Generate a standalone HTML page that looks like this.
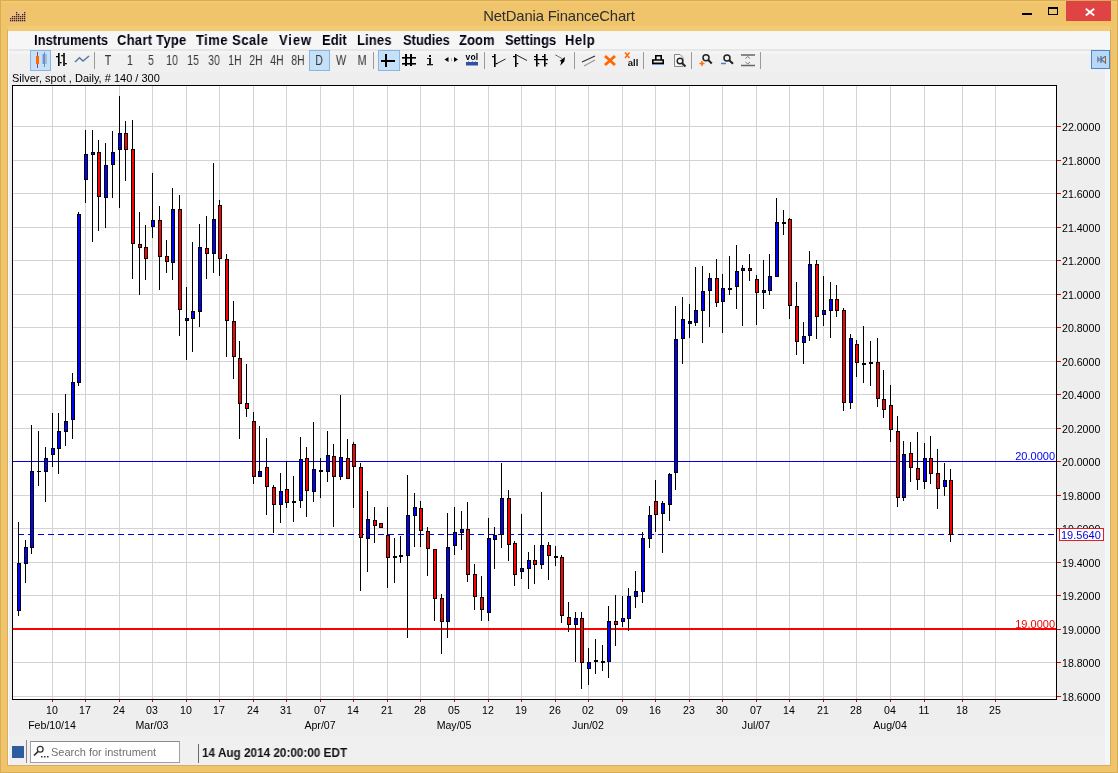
<!DOCTYPE html>
<html><head><meta charset="utf-8">
<style>
*{margin:0;padding:0;box-sizing:border-box}
html,body{width:1118px;height:773px;overflow:hidden;background:#efc46b;font-family:"Liberation Sans",sans-serif;position:relative}
.a,.menu,.tb,.yl,.xl,.ml{will-change:transform}
.a{position:absolute}
.frame{position:absolute;left:0;top:0;width:1118px;height:773px;border:1px solid #d9ad55}
.client{position:absolute;left:8px;top:31px;width:1102px;height:734px;background:#f0f0f0;border-left:1px solid #fafafa;border-right:5px solid #f4f6fa;border-bottom:2px solid #f0eef8}
.menubar{position:absolute;left:9px;top:31px;width:1096px;height:18px;background:#f6f6f6}
.menu{position:absolute;top:32px;font-weight:bold;font-size:14px;color:#000010;white-space:nowrap;transform:scaleX(0.925);transform-origin:0 0}
.tb{position:absolute;top:53px;font-size:12px;color:#333;white-space:nowrap}
.yl{position:absolute;left:1062px;font-size:10.6px;color:#000;line-height:14px;white-space:nowrap}
.xl{position:absolute;top:703px;width:40px;text-align:center;font-size:10.6px;line-height:14px;color:#000}
.ml{position:absolute;top:718px;width:80px;text-align:center;font-size:10.6px;line-height:14px;color:#000}
.sep{position:absolute;top:52px;width:1px;height:17px;background:#a8a8a8}
</style></head><body>
<div class="frame"></div>
<div class="a" style="left:1px;top:1px;width:1116px;height:2px;background:#f2c970"></div>
<div class="a" style="left:8px;top:26px;width:1102px;height:5px;background:#f3cb74"></div>
<div class="client"></div>
<div class="menubar"></div>
<div class="a" style="left:9px;top:49px;width:1096px;height:2px;background:#e7e7e7"></div>
<div class="a" style="left:9px;top:51px;width:1096px;height:3px;background:#f4f4f4"></div>
<div class="a" style="left:9px;top:72px;width:1096px;height:664px;background:#eeeeee"></div>
<div class="a" style="left:7px;top:30px;width:1px;height:736px;background:#d8ae58"></div>
<div class="a" style="left:1110px;top:30px;width:1px;height:736px;background:#d8ae58"></div>
<div class="a" style="left:7px;top:765px;width:1104px;height:1px;background:#d8ae58"></div>
<!-- title -->
<div class="a" style="left:0;top:7px;width:1118px;text-align:center;font-size:14.8px;letter-spacing:-0.15px;color:#2e2e2e;line-height:18px">NetDania FinanceChart</div>
<svg class="a" style="left:8px;top:8px" width="26" height="18">
<g>
<rect x="0" y="0" width="1" height="1" fill="#e8b8d8" opacity="0.6"/><rect x="2" y="0" width="1" height="1" fill="#e8b8d8" opacity="0.6"/><rect x="4" y="0" width="1" height="1" fill="#e8b8d8" opacity="0.6"/><rect x="6" y="0" width="1" height="1" fill="#e8b8d8" opacity="0.6"/><rect x="8" y="0" width="1" height="1" fill="#e8b8d8" opacity="0.6"/><rect x="10" y="0" width="1" height="1" fill="#e8b8d8" opacity="0.6"/><rect x="12" y="0" width="1" height="1" fill="#e8b8d8" opacity="0.6"/><rect x="14" y="0" width="1" height="1" fill="#e8b8d8" opacity="0.6"/><rect x="16" y="0" width="1" height="1" fill="#e8b8d8" opacity="0.6"/><rect x="0" y="2" width="1" height="1" fill="#e8b8d8" opacity="0.6"/><rect x="2" y="2" width="1" height="1" fill="#e8b8d8" opacity="0.6"/><rect x="4" y="2" width="1" height="1" fill="#e8b8d8" opacity="0.6"/><rect x="6" y="2" width="1" height="1" fill="#e8b8d8" opacity="0.6"/><rect x="8" y="2" width="1" height="1" fill="#e8b8d8" opacity="0.6"/><rect x="10" y="2" width="1" height="1" fill="#e8b8d8" opacity="0.6"/><rect x="12" y="2" width="1" height="1" fill="#e8b8d8" opacity="0.6"/><rect x="14" y="2" width="1" height="1" fill="#e8b8d8" opacity="0.6"/><rect x="16" y="2" width="1" height="1" fill="#e8b8d8" opacity="0.6"/><rect x="0" y="4" width="1" height="1" fill="#e8b8d8" opacity="0.6"/><rect x="2" y="4" width="1" height="1" fill="#e8b8d8" opacity="0.6"/><rect x="4" y="4" width="1" height="1" fill="#e8b8d8" opacity="0.6"/><rect x="6" y="4" width="1" height="1" fill="#e8b8d8" opacity="0.6"/><rect x="8" y="4" width="1.3" height="1.3" fill="#3a1a40"/><rect x="10" y="4" width="1" height="1" fill="#e8b8d8" opacity="0.6"/><rect x="12" y="4" width="1" height="1" fill="#e8b8d8" opacity="0.6"/><rect x="14" y="4" width="1" height="1" fill="#e8b8d8" opacity="0.6"/><rect x="16" y="4" width="1.3" height="1.3" fill="#3a1a40"/><rect x="0" y="6" width="1" height="1" fill="#e8b8d8" opacity="0.6"/><rect x="2" y="6" width="1" height="1" fill="#e8b8d8" opacity="0.6"/><rect x="4" y="6" width="1" height="1" fill="#e8b8d8" opacity="0.6"/><rect x="6" y="6" width="1" height="1" fill="#e8b8d8" opacity="0.6"/><rect x="8" y="6" width="1.3" height="1.3" fill="#3a1a40"/><rect x="10" y="6" width="1.3" height="1.3" fill="#3a1a40"/><rect x="12" y="6" width="1" height="1" fill="#e8b8d8" opacity="0.6"/><rect x="14" y="6" width="1.3" height="1.3" fill="#3a1a40"/><rect x="16" y="6" width="1.3" height="1.3" fill="#3a1a40"/><rect x="0" y="8" width="1" height="1" fill="#e8b8d8" opacity="0.6"/><rect x="2" y="8" width="1" height="1" fill="#e8b8d8" opacity="0.6"/><rect x="4" y="8" width="1.3" height="1.3" fill="#3a1a40"/><rect x="6" y="8" width="1.3" height="1.3" fill="#3a1a40"/><rect x="8" y="8" width="1.3" height="1.3" fill="#3a1a40"/><rect x="10" y="8" width="1.3" height="1.3" fill="#3a1a40"/><rect x="12" y="8" width="1.3" height="1.3" fill="#3a1a40"/><rect x="14" y="8" width="1.3" height="1.3" fill="#3a1a40"/><rect x="16" y="8" width="1.3" height="1.3" fill="#3a1a40"/><rect x="0" y="10" width="1" height="1" fill="#e8b8d8" opacity="0.6"/><rect x="2" y="10" width="1.3" height="1.3" fill="#3a1a40"/><rect x="4" y="10" width="1.3" height="1.3" fill="#3a1a40"/><rect x="6" y="10" width="1.3" height="1.3" fill="#3a1a40"/><rect x="8" y="10" width="1.3" height="1.3" fill="#3a1a40"/><rect x="10" y="10" width="1.3" height="1.3" fill="#3a1a40"/><rect x="12" y="10" width="1.3" height="1.3" fill="#3a1a40"/><rect x="14" y="10" width="1.3" height="1.3" fill="#3a1a40"/><rect x="16" y="10" width="1.3" height="1.3" fill="#3a1a40"/><rect x="0" y="12" width="1" height="1" fill="#e8b8d8" opacity="0.6"/><rect x="2" y="12" width="1.3" height="1.3" fill="#3a1a40"/><rect x="4" y="12" width="1.3" height="1.3" fill="#3a1a40"/><rect x="6" y="12" width="1.3" height="1.3" fill="#3a1a40"/><rect x="8" y="12" width="1.3" height="1.3" fill="#3a1a40"/><rect x="10" y="12" width="1.3" height="1.3" fill="#3a1a40"/><rect x="12" y="12" width="1.3" height="1.3" fill="#3a1a40"/><rect x="14" y="12" width="1.3" height="1.3" fill="#3a1a40"/><rect x="16" y="12" width="1.3" height="1.3" fill="#3a1a40"/><rect x="0" y="14" width="1" height="1" fill="#e8b8d8" opacity="0.6"/><rect x="2" y="14" width="1" height="1" fill="#e8b8d8" opacity="0.6"/><rect x="4" y="14" width="1" height="1" fill="#e8b8d8" opacity="0.6"/><rect x="6" y="14" width="1" height="1" fill="#e8b8d8" opacity="0.6"/><rect x="8" y="14" width="1" height="1" fill="#e8b8d8" opacity="0.6"/><rect x="10" y="14" width="1" height="1" fill="#e8b8d8" opacity="0.6"/><rect x="12" y="14" width="1" height="1" fill="#e8b8d8" opacity="0.6"/><rect x="14" y="14" width="1" height="1" fill="#e8b8d8" opacity="0.6"/><rect x="16" y="14" width="1" height="1" fill="#e8b8d8" opacity="0.6"/></g></svg>
<div class="a" style="left:1022px;top:13px;width:10px;height:2px;background:#000"></div>
<div class="a" style="left:1048px;top:7px;width:10px;height:8px;border:1px solid #000;border-top-width:2px"></div>
<div class="a" style="left:1066px;top:1px;width:45px;height:20px;background:#e04343"></div>
<svg class="a" style="left:1084px;top:7px" width="12" height="10"><path d="M1.8 1.8 L10.2 8.6 M10.2 1.8 L1.8 8.6" stroke="#fff" stroke-width="1.9"/></svg>
<div class="menu" style="left:34px;letter-spacing:0px">Instruments</div>
<div class="menu" style="left:116.5px;letter-spacing:0.31px">Chart Type</div>
<div class="menu" style="left:195.5px;letter-spacing:0.54px">Time Scale</div>
<div class="menu" style="left:278.5px;letter-spacing:1.0px">View</div>
<div class="menu" style="left:321.5px;letter-spacing:0.07px">Edit</div>
<div class="menu" style="left:356.5px;letter-spacing:0.17px">Lines</div>
<div class="menu" style="left:402.5px;letter-spacing:0px">Studies</div>
<div class="menu" style="left:458.5px;letter-spacing:0.1px">Zoom</div>
<div class="menu" style="left:504.5px;letter-spacing:0px">Settings</div>
<div class="menu" style="left:564.5px;letter-spacing:0.57px">Help</div>

<svg class="a" style="left:0;top:0" width="1118" height="773">
<rect x="12" y="85" width="1045" height="615" fill="#fff"/>
<rect x="52" y="86" width="1" height="613" fill="#d3d3d3"/>
<rect x="85" y="86" width="1" height="613" fill="#d3d3d3"/>
<rect x="119" y="86" width="1" height="613" fill="#d3d3d3"/>
<rect x="152" y="86" width="1" height="613" fill="#d3d3d3"/>
<rect x="186" y="86" width="1" height="613" fill="#d3d3d3"/>
<rect x="219" y="86" width="1" height="613" fill="#d3d3d3"/>
<rect x="253" y="86" width="1" height="613" fill="#d3d3d3"/>
<rect x="286" y="86" width="1" height="613" fill="#d3d3d3"/>
<rect x="320" y="86" width="1" height="613" fill="#d3d3d3"/>
<rect x="353" y="86" width="1" height="613" fill="#d3d3d3"/>
<rect x="387" y="86" width="1" height="613" fill="#d3d3d3"/>
<rect x="420" y="86" width="1" height="613" fill="#d3d3d3"/>
<rect x="454" y="86" width="1" height="613" fill="#d3d3d3"/>
<rect x="488" y="86" width="1" height="613" fill="#d3d3d3"/>
<rect x="521" y="86" width="1" height="613" fill="#d3d3d3"/>
<rect x="555" y="86" width="1" height="613" fill="#d3d3d3"/>
<rect x="588" y="86" width="1" height="613" fill="#d3d3d3"/>
<rect x="622" y="86" width="1" height="613" fill="#d3d3d3"/>
<rect x="655" y="86" width="1" height="613" fill="#d3d3d3"/>
<rect x="689" y="86" width="1" height="613" fill="#d3d3d3"/>
<rect x="722" y="86" width="1" height="613" fill="#d3d3d3"/>
<rect x="756" y="86" width="1" height="613" fill="#d3d3d3"/>
<rect x="789" y="86" width="1" height="613" fill="#d3d3d3"/>
<rect x="823" y="86" width="1" height="613" fill="#d3d3d3"/>
<rect x="856" y="86" width="1" height="613" fill="#d3d3d3"/>
<rect x="890" y="86" width="1" height="613" fill="#d3d3d3"/>
<rect x="924" y="86" width="1" height="613" fill="#d3d3d3"/>
<rect x="962" y="86" width="1" height="613" fill="#d3d3d3"/>
<rect x="995" y="86" width="1" height="613" fill="#d3d3d3"/>
<rect x="13" y="126" width="1043" height="1" fill="#d3d3d3"/>
<rect x="13" y="160" width="1043" height="1" fill="#d3d3d3"/>
<rect x="13" y="193" width="1043" height="1" fill="#d3d3d3"/>
<rect x="13" y="227" width="1043" height="1" fill="#d3d3d3"/>
<rect x="13" y="260" width="1043" height="1" fill="#d3d3d3"/>
<rect x="13" y="294" width="1043" height="1" fill="#d3d3d3"/>
<rect x="13" y="327" width="1043" height="1" fill="#d3d3d3"/>
<rect x="13" y="361" width="1043" height="1" fill="#d3d3d3"/>
<rect x="13" y="394" width="1043" height="1" fill="#d3d3d3"/>
<rect x="13" y="428" width="1043" height="1" fill="#d3d3d3"/>
<rect x="13" y="461" width="1043" height="1" fill="#d3d3d3"/>
<rect x="13" y="495" width="1043" height="1" fill="#d3d3d3"/>
<rect x="13" y="528" width="1043" height="1" fill="#d3d3d3"/>
<rect x="13" y="562" width="1043" height="1" fill="#d3d3d3"/>
<rect x="13" y="595" width="1043" height="1" fill="#d3d3d3"/>
<rect x="13" y="629" width="1043" height="1" fill="#d3d3d3"/>
<rect x="13" y="662" width="1043" height="1" fill="#d3d3d3"/>
<rect x="13" y="696" width="1043" height="1" fill="#d3d3d3"/>
<rect x="13" y="461" width="1043" height="1" fill="#0000f0"/>
<rect x="13" y="628" width="1043" height="2" fill="#ff0000"/>
<line x1="18" y1="534.5" x2="1056" y2="534.5" stroke="#0000f0" stroke-width="1" stroke-dasharray="6 4"/>
<rect x="18" y="522" width="1" height="94" fill="#000"/>
<rect x="17" y="563" width="4" height="48" fill="#000"/>
<rect x="18" y="564" width="2" height="46" fill="#0000ff"/>
<rect x="25" y="540" width="1" height="43" fill="#000"/>
<rect x="24" y="547" width="4" height="17" fill="#000"/>
<rect x="25" y="548" width="2" height="15" fill="#0000ff"/>
<rect x="31" y="425" width="1" height="129" fill="#000"/>
<rect x="30" y="471" width="4" height="77" fill="#000"/>
<rect x="31" y="472" width="2" height="75" fill="#0000ff"/>
<rect x="38" y="431" width="1" height="55" fill="#000"/>
<rect x="37" y="471" width="4" height="1" fill="#000"/>
<rect x="45" y="447" width="1" height="55" fill="#000"/>
<rect x="44" y="458" width="4" height="14" fill="#000"/>
<rect x="45" y="459" width="2" height="12" fill="#0000ff"/>
<rect x="52" y="413" width="1" height="54" fill="#000"/>
<rect x="51" y="448" width="4" height="7" fill="#000"/>
<rect x="52" y="449" width="2" height="5" fill="#0000ff"/>
<rect x="58" y="413" width="1" height="61" fill="#000"/>
<rect x="57" y="431" width="4" height="18" fill="#000"/>
<rect x="58" y="432" width="2" height="16" fill="#0000ff"/>
<rect x="65" y="394" width="1" height="52" fill="#000"/>
<rect x="64" y="421" width="4" height="11" fill="#000"/>
<rect x="65" y="422" width="2" height="9" fill="#0000ff"/>
<rect x="72" y="373" width="1" height="66" fill="#000"/>
<rect x="71" y="382" width="4" height="38" fill="#000"/>
<rect x="72" y="383" width="2" height="36" fill="#0000ff"/>
<rect x="78" y="212" width="1" height="174" fill="#000"/>
<rect x="77" y="214" width="4" height="169" fill="#000"/>
<rect x="78" y="215" width="2" height="167" fill="#0000ff"/>
<rect x="85" y="130" width="1" height="73" fill="#000"/>
<rect x="84" y="154" width="4" height="26" fill="#000"/>
<rect x="85" y="155" width="2" height="24" fill="#0000ff"/>
<rect x="92" y="130" width="1" height="112" fill="#000"/>
<rect x="91" y="152" width="4" height="3" fill="#000"/>
<rect x="92" y="153" width="2" height="1" fill="#0000ff"/>
<rect x="98" y="140" width="1" height="91" fill="#000"/>
<rect x="97" y="152" width="4" height="45" fill="#000"/>
<rect x="98" y="153" width="2" height="43" fill="#ff0000"/>
<rect x="105" y="143" width="1" height="85" fill="#000"/>
<rect x="104" y="165" width="4" height="33" fill="#000"/>
<rect x="105" y="166" width="2" height="31" fill="#0000ff"/>
<rect x="112" y="131" width="1" height="67" fill="#000"/>
<rect x="111" y="152" width="4" height="13" fill="#000"/>
<rect x="112" y="153" width="2" height="11" fill="#0000ff"/>
<rect x="119" y="96" width="1" height="112" fill="#000"/>
<rect x="118" y="133" width="4" height="17" fill="#000"/>
<rect x="119" y="134" width="2" height="15" fill="#0000ff"/>
<rect x="125" y="121" width="1" height="60" fill="#000"/>
<rect x="124" y="133" width="4" height="17" fill="#000"/>
<rect x="125" y="134" width="2" height="15" fill="#ff0000"/>
<rect x="132" y="120" width="1" height="159" fill="#000"/>
<rect x="131" y="149" width="4" height="95" fill="#000"/>
<rect x="132" y="150" width="2" height="93" fill="#ff0000"/>
<rect x="139" y="212" width="1" height="83" fill="#000"/>
<rect x="138" y="244" width="4" height="4" fill="#000"/>
<rect x="139" y="245" width="2" height="2" fill="#ff0000"/>
<rect x="145" y="225" width="1" height="55" fill="#000"/>
<rect x="144" y="247" width="4" height="12" fill="#000"/>
<rect x="145" y="248" width="2" height="10" fill="#ff0000"/>
<rect x="152" y="173" width="1" height="65" fill="#000"/>
<rect x="151" y="220" width="4" height="7" fill="#000"/>
<rect x="152" y="221" width="2" height="5" fill="#0000ff"/>
<rect x="159" y="206" width="1" height="84" fill="#000"/>
<rect x="158" y="220" width="4" height="37" fill="#000"/>
<rect x="159" y="221" width="2" height="35" fill="#ff0000"/>
<rect x="166" y="240" width="1" height="33" fill="#000"/>
<rect x="165" y="256" width="4" height="6" fill="#000"/>
<rect x="166" y="257" width="2" height="4" fill="#ff0000"/>
<rect x="172" y="188" width="1" height="92" fill="#000"/>
<rect x="171" y="209" width="4" height="54" fill="#000"/>
<rect x="172" y="210" width="2" height="52" fill="#0000ff"/>
<rect x="179" y="195" width="1" height="141" fill="#000"/>
<rect x="178" y="209" width="4" height="101" fill="#000"/>
<rect x="179" y="210" width="2" height="99" fill="#ff0000"/>
<rect x="186" y="287" width="1" height="73" fill="#000"/>
<rect x="185" y="318" width="4" height="3" fill="#000"/>
<rect x="186" y="319" width="2" height="1" fill="#0000ff"/>
<rect x="192" y="242" width="1" height="110" fill="#000"/>
<rect x="191" y="311" width="4" height="8" fill="#000"/>
<rect x="192" y="312" width="2" height="6" fill="#0000ff"/>
<rect x="199" y="224" width="1" height="103" fill="#000"/>
<rect x="198" y="247" width="4" height="65" fill="#000"/>
<rect x="199" y="248" width="2" height="63" fill="#0000ff"/>
<rect x="206" y="216" width="1" height="63" fill="#000"/>
<rect x="205" y="248" width="4" height="6" fill="#000"/>
<rect x="206" y="249" width="2" height="4" fill="#ff0000"/>
<rect x="213" y="163" width="1" height="110" fill="#000"/>
<rect x="212" y="219" width="4" height="35" fill="#000"/>
<rect x="213" y="220" width="2" height="33" fill="#0000ff"/>
<rect x="219" y="200" width="1" height="76" fill="#000"/>
<rect x="218" y="205" width="4" height="54" fill="#000"/>
<rect x="219" y="206" width="2" height="52" fill="#ff0000"/>
<rect x="226" y="254" width="1" height="103" fill="#000"/>
<rect x="225" y="259" width="4" height="62" fill="#000"/>
<rect x="226" y="260" width="2" height="60" fill="#ff0000"/>
<rect x="233" y="301" width="1" height="78" fill="#000"/>
<rect x="232" y="321" width="4" height="36" fill="#000"/>
<rect x="233" y="322" width="2" height="34" fill="#ff0000"/>
<rect x="239" y="341" width="1" height="98" fill="#000"/>
<rect x="238" y="358" width="4" height="46" fill="#000"/>
<rect x="239" y="359" width="2" height="44" fill="#ff0000"/>
<rect x="246" y="364" width="1" height="53" fill="#000"/>
<rect x="245" y="403" width="4" height="6" fill="#000"/>
<rect x="246" y="404" width="2" height="4" fill="#ff0000"/>
<rect x="253" y="412" width="1" height="72" fill="#000"/>
<rect x="252" y="421" width="4" height="56" fill="#000"/>
<rect x="253" y="422" width="2" height="54" fill="#ff0000"/>
<rect x="259" y="426" width="1" height="51" fill="#000"/>
<rect x="258" y="471" width="4" height="6" fill="#000"/>
<rect x="259" y="472" width="2" height="4" fill="#0000ff"/>
<rect x="266" y="438" width="1" height="77" fill="#000"/>
<rect x="265" y="467" width="4" height="20" fill="#000"/>
<rect x="266" y="468" width="2" height="18" fill="#ff0000"/>
<rect x="273" y="485" width="1" height="48" fill="#000"/>
<rect x="272" y="487" width="4" height="18" fill="#000"/>
<rect x="273" y="488" width="2" height="16" fill="#ff0000"/>
<rect x="280" y="473" width="1" height="50" fill="#000"/>
<rect x="279" y="491" width="4" height="14" fill="#000"/>
<rect x="280" y="492" width="2" height="12" fill="#0000ff"/>
<rect x="286" y="461" width="1" height="47" fill="#000"/>
<rect x="285" y="489" width="4" height="14" fill="#000"/>
<rect x="286" y="490" width="2" height="12" fill="#ff0000"/>
<rect x="293" y="476" width="1" height="46" fill="#000"/>
<rect x="292" y="501" width="4" height="2" fill="#000"/>
<rect x="300" y="437" width="1" height="71" fill="#000"/>
<rect x="299" y="459" width="4" height="42" fill="#000"/>
<rect x="300" y="460" width="2" height="40" fill="#0000ff"/>
<rect x="306" y="447" width="1" height="70" fill="#000"/>
<rect x="305" y="458" width="4" height="33" fill="#000"/>
<rect x="306" y="459" width="2" height="31" fill="#ff0000"/>
<rect x="313" y="422" width="1" height="80" fill="#000"/>
<rect x="312" y="469" width="4" height="23" fill="#000"/>
<rect x="313" y="470" width="2" height="21" fill="#0000ff"/>
<rect x="320" y="458" width="1" height="40" fill="#000"/>
<rect x="319" y="470" width="4" height="2" fill="#000"/>
<rect x="327" y="431" width="1" height="51" fill="#000"/>
<rect x="326" y="455" width="4" height="17" fill="#000"/>
<rect x="327" y="456" width="2" height="15" fill="#0000ff"/>
<rect x="333" y="444" width="1" height="83" fill="#000"/>
<rect x="332" y="456" width="4" height="21" fill="#000"/>
<rect x="333" y="457" width="2" height="19" fill="#ff0000"/>
<rect x="340" y="395" width="1" height="85" fill="#000"/>
<rect x="339" y="457" width="4" height="20" fill="#000"/>
<rect x="340" y="458" width="2" height="18" fill="#0000ff"/>
<rect x="347" y="439" width="1" height="40" fill="#000"/>
<rect x="346" y="458" width="4" height="21" fill="#000"/>
<rect x="347" y="459" width="2" height="19" fill="#ff0000"/>
<rect x="353" y="442" width="1" height="66" fill="#000"/>
<rect x="352" y="444" width="4" height="23" fill="#000"/>
<rect x="353" y="445" width="2" height="21" fill="#ff0000"/>
<rect x="360" y="463" width="1" height="128" fill="#000"/>
<rect x="359" y="467" width="4" height="71" fill="#000"/>
<rect x="360" y="468" width="2" height="69" fill="#ff0000"/>
<rect x="367" y="491" width="1" height="81" fill="#000"/>
<rect x="366" y="519" width="4" height="20" fill="#000"/>
<rect x="367" y="520" width="2" height="18" fill="#0000ff"/>
<rect x="374" y="507" width="1" height="36" fill="#000"/>
<rect x="373" y="520" width="4" height="6" fill="#000"/>
<rect x="374" y="521" width="2" height="4" fill="#ff0000"/>
<rect x="380" y="523" width="1" height="5" fill="#000"/>
<rect x="379" y="523" width="4" height="5" fill="#000"/>
<rect x="380" y="524" width="2" height="3" fill="#ff0000"/>
<rect x="387" y="507" width="1" height="81" fill="#000"/>
<rect x="386" y="535" width="4" height="23" fill="#000"/>
<rect x="387" y="536" width="2" height="21" fill="#ff0000"/>
<rect x="394" y="538" width="1" height="45" fill="#000"/>
<rect x="393" y="556" width="4" height="2" fill="#000"/>
<rect x="400" y="536" width="1" height="27" fill="#000"/>
<rect x="399" y="555" width="4" height="2" fill="#000"/>
<rect x="407" y="475" width="1" height="163" fill="#000"/>
<rect x="406" y="515" width="4" height="41" fill="#000"/>
<rect x="407" y="516" width="2" height="39" fill="#0000ff"/>
<rect x="414" y="493" width="1" height="54" fill="#000"/>
<rect x="413" y="507" width="4" height="9" fill="#000"/>
<rect x="414" y="508" width="2" height="7" fill="#0000ff"/>
<rect x="420" y="501" width="1" height="46" fill="#000"/>
<rect x="419" y="508" width="4" height="23" fill="#000"/>
<rect x="420" y="509" width="2" height="21" fill="#ff0000"/>
<rect x="427" y="527" width="1" height="49" fill="#000"/>
<rect x="426" y="531" width="4" height="18" fill="#000"/>
<rect x="427" y="532" width="2" height="16" fill="#ff0000"/>
<rect x="434" y="549" width="1" height="72" fill="#000"/>
<rect x="433" y="549" width="4" height="50" fill="#000"/>
<rect x="434" y="550" width="2" height="48" fill="#ff0000"/>
<rect x="441" y="594" width="1" height="60" fill="#000"/>
<rect x="440" y="598" width="4" height="24" fill="#000"/>
<rect x="441" y="599" width="2" height="22" fill="#ff0000"/>
<rect x="447" y="513" width="1" height="125" fill="#000"/>
<rect x="446" y="547" width="4" height="75" fill="#000"/>
<rect x="447" y="548" width="2" height="73" fill="#0000ff"/>
<rect x="454" y="507" width="1" height="48" fill="#000"/>
<rect x="453" y="532" width="4" height="14" fill="#000"/>
<rect x="454" y="533" width="2" height="12" fill="#0000ff"/>
<rect x="461" y="511" width="1" height="39" fill="#000"/>
<rect x="460" y="529" width="4" height="4" fill="#000"/>
<rect x="461" y="530" width="2" height="2" fill="#0000ff"/>
<rect x="467" y="502" width="1" height="80" fill="#000"/>
<rect x="466" y="529" width="4" height="46" fill="#000"/>
<rect x="467" y="530" width="2" height="44" fill="#ff0000"/>
<rect x="474" y="564" width="1" height="46" fill="#000"/>
<rect x="473" y="574" width="4" height="23" fill="#000"/>
<rect x="474" y="575" width="2" height="21" fill="#ff0000"/>
<rect x="481" y="576" width="1" height="45" fill="#000"/>
<rect x="480" y="597" width="4" height="13" fill="#000"/>
<rect x="481" y="598" width="2" height="11" fill="#ff0000"/>
<rect x="488" y="518" width="1" height="103" fill="#000"/>
<rect x="487" y="538" width="4" height="75" fill="#000"/>
<rect x="488" y="539" width="2" height="73" fill="#0000ff"/>
<rect x="494" y="527" width="1" height="42" fill="#000"/>
<rect x="493" y="535" width="4" height="5" fill="#000"/>
<rect x="494" y="536" width="2" height="3" fill="#0000ff"/>
<rect x="501" y="463" width="1" height="85" fill="#000"/>
<rect x="500" y="498" width="4" height="37" fill="#000"/>
<rect x="501" y="499" width="2" height="35" fill="#0000ff"/>
<rect x="508" y="490" width="1" height="71" fill="#000"/>
<rect x="507" y="498" width="4" height="47" fill="#000"/>
<rect x="508" y="499" width="2" height="45" fill="#ff0000"/>
<rect x="514" y="541" width="1" height="45" fill="#000"/>
<rect x="513" y="543" width="4" height="32" fill="#000"/>
<rect x="514" y="544" width="2" height="30" fill="#ff0000"/>
<rect x="521" y="514" width="1" height="65" fill="#000"/>
<rect x="520" y="568" width="4" height="4" fill="#000"/>
<rect x="521" y="569" width="2" height="2" fill="#0000ff"/>
<rect x="528" y="552" width="1" height="37" fill="#000"/>
<rect x="527" y="560" width="4" height="9" fill="#000"/>
<rect x="528" y="561" width="2" height="7" fill="#0000ff"/>
<rect x="534" y="545" width="1" height="39" fill="#000"/>
<rect x="533" y="560" width="4" height="5" fill="#000"/>
<rect x="534" y="561" width="2" height="3" fill="#ff0000"/>
<rect x="541" y="492" width="1" height="77" fill="#000"/>
<rect x="540" y="545" width="4" height="20" fill="#000"/>
<rect x="541" y="546" width="2" height="18" fill="#0000ff"/>
<rect x="548" y="542" width="1" height="38" fill="#000"/>
<rect x="547" y="545" width="4" height="11" fill="#000"/>
<rect x="548" y="546" width="2" height="9" fill="#ff0000"/>
<rect x="555" y="546" width="1" height="20" fill="#000"/>
<rect x="554" y="556" width="4" height="2" fill="#000"/>
<rect x="561" y="555" width="1" height="68" fill="#000"/>
<rect x="560" y="557" width="4" height="59" fill="#000"/>
<rect x="561" y="558" width="2" height="57" fill="#ff0000"/>
<rect x="568" y="602" width="1" height="30" fill="#000"/>
<rect x="567" y="617" width="4" height="8" fill="#000"/>
<rect x="568" y="618" width="2" height="6" fill="#ff0000"/>
<rect x="575" y="612" width="1" height="50" fill="#000"/>
<rect x="574" y="618" width="4" height="7" fill="#000"/>
<rect x="575" y="619" width="2" height="5" fill="#0000ff"/>
<rect x="581" y="612" width="1" height="77" fill="#000"/>
<rect x="580" y="618" width="4" height="45" fill="#000"/>
<rect x="581" y="619" width="2" height="43" fill="#ff0000"/>
<rect x="588" y="648" width="1" height="37" fill="#000"/>
<rect x="587" y="662" width="4" height="7" fill="#000"/>
<rect x="588" y="663" width="2" height="5" fill="#0000ff"/>
<rect x="595" y="639" width="1" height="35" fill="#000"/>
<rect x="594" y="660" width="4" height="2" fill="#000"/>
<rect x="602" y="645" width="1" height="26" fill="#000"/>
<rect x="601" y="661" width="4" height="2" fill="#000"/>
<rect x="608" y="606" width="1" height="72" fill="#000"/>
<rect x="607" y="621" width="4" height="41" fill="#000"/>
<rect x="608" y="622" width="2" height="39" fill="#0000ff"/>
<rect x="615" y="595" width="1" height="51" fill="#000"/>
<rect x="614" y="621" width="4" height="4" fill="#000"/>
<rect x="615" y="622" width="2" height="2" fill="#ff0000"/>
<rect x="622" y="596" width="1" height="31" fill="#000"/>
<rect x="621" y="618" width="4" height="4" fill="#000"/>
<rect x="622" y="619" width="2" height="2" fill="#0000ff"/>
<rect x="628" y="588" width="1" height="43" fill="#000"/>
<rect x="627" y="596" width="4" height="23" fill="#000"/>
<rect x="628" y="597" width="2" height="21" fill="#0000ff"/>
<rect x="635" y="571" width="1" height="37" fill="#000"/>
<rect x="634" y="591" width="4" height="6" fill="#000"/>
<rect x="635" y="592" width="2" height="4" fill="#0000ff"/>
<rect x="642" y="532" width="1" height="71" fill="#000"/>
<rect x="641" y="538" width="4" height="54" fill="#000"/>
<rect x="642" y="539" width="2" height="52" fill="#0000ff"/>
<rect x="649" y="506" width="1" height="42" fill="#000"/>
<rect x="648" y="515" width="4" height="24" fill="#000"/>
<rect x="649" y="516" width="2" height="22" fill="#0000ff"/>
<rect x="655" y="480" width="1" height="52" fill="#000"/>
<rect x="654" y="501" width="4" height="14" fill="#000"/>
<rect x="655" y="502" width="2" height="12" fill="#ff0000"/>
<rect x="662" y="501" width="1" height="52" fill="#000"/>
<rect x="661" y="503" width="4" height="11" fill="#000"/>
<rect x="662" y="504" width="2" height="9" fill="#0000ff"/>
<rect x="669" y="473" width="1" height="48" fill="#000"/>
<rect x="668" y="474" width="4" height="31" fill="#000"/>
<rect x="669" y="475" width="2" height="29" fill="#0000ff"/>
<rect x="675" y="306" width="1" height="184" fill="#000"/>
<rect x="674" y="339" width="4" height="134" fill="#000"/>
<rect x="675" y="340" width="2" height="132" fill="#0000ff"/>
<rect x="682" y="297" width="1" height="67" fill="#000"/>
<rect x="681" y="319" width="4" height="20" fill="#000"/>
<rect x="682" y="320" width="2" height="18" fill="#0000ff"/>
<rect x="689" y="304" width="1" height="34" fill="#000"/>
<rect x="688" y="321" width="4" height="3" fill="#000"/>
<rect x="689" y="322" width="2" height="1" fill="#0000ff"/>
<rect x="695" y="267" width="1" height="59" fill="#000"/>
<rect x="694" y="310" width="4" height="13" fill="#000"/>
<rect x="695" y="311" width="2" height="11" fill="#0000ff"/>
<rect x="702" y="266" width="1" height="77" fill="#000"/>
<rect x="701" y="291" width="4" height="20" fill="#000"/>
<rect x="702" y="292" width="2" height="18" fill="#0000ff"/>
<rect x="709" y="273" width="1" height="54" fill="#000"/>
<rect x="708" y="278" width="4" height="13" fill="#000"/>
<rect x="709" y="279" width="2" height="11" fill="#0000ff"/>
<rect x="716" y="259" width="1" height="48" fill="#000"/>
<rect x="715" y="278" width="4" height="25" fill="#000"/>
<rect x="716" y="279" width="2" height="23" fill="#ff0000"/>
<rect x="722" y="274" width="1" height="59" fill="#000"/>
<rect x="721" y="288" width="4" height="14" fill="#000"/>
<rect x="722" y="289" width="2" height="12" fill="#0000ff"/>
<rect x="729" y="256" width="1" height="39" fill="#000"/>
<rect x="728" y="288" width="4" height="2" fill="#000"/>
<rect x="736" y="245" width="1" height="64" fill="#000"/>
<rect x="735" y="271" width="4" height="16" fill="#000"/>
<rect x="736" y="272" width="2" height="14" fill="#0000ff"/>
<rect x="742" y="265" width="1" height="61" fill="#000"/>
<rect x="741" y="268" width="4" height="3" fill="#000"/>
<rect x="742" y="269" width="2" height="1" fill="#0000ff"/>
<rect x="749" y="254" width="1" height="27" fill="#000"/>
<rect x="748" y="268" width="4" height="3" fill="#000"/>
<rect x="749" y="269" width="2" height="1" fill="#ff0000"/>
<rect x="756" y="275" width="1" height="50" fill="#000"/>
<rect x="755" y="279" width="4" height="14" fill="#000"/>
<rect x="756" y="280" width="2" height="12" fill="#ff0000"/>
<rect x="763" y="260" width="1" height="49" fill="#000"/>
<rect x="762" y="290" width="4" height="3" fill="#000"/>
<rect x="763" y="291" width="2" height="1" fill="#0000ff"/>
<rect x="769" y="254" width="1" height="41" fill="#000"/>
<rect x="768" y="276" width="4" height="15" fill="#000"/>
<rect x="769" y="277" width="2" height="13" fill="#0000ff"/>
<rect x="776" y="198" width="1" height="79" fill="#000"/>
<rect x="775" y="222" width="4" height="55" fill="#000"/>
<rect x="776" y="223" width="2" height="53" fill="#0000ff"/>
<rect x="783" y="210" width="1" height="25" fill="#000"/>
<rect x="782" y="222" width="4" height="2" fill="#000"/>
<rect x="789" y="218" width="1" height="101" fill="#000"/>
<rect x="788" y="219" width="4" height="87" fill="#000"/>
<rect x="789" y="220" width="2" height="85" fill="#ff0000"/>
<rect x="796" y="282" width="1" height="73" fill="#000"/>
<rect x="795" y="306" width="4" height="36" fill="#000"/>
<rect x="796" y="307" width="2" height="34" fill="#ff0000"/>
<rect x="803" y="322" width="1" height="42" fill="#000"/>
<rect x="802" y="336" width="4" height="7" fill="#000"/>
<rect x="803" y="337" width="2" height="5" fill="#0000ff"/>
<rect x="809" y="251" width="1" height="90" fill="#000"/>
<rect x="808" y="264" width="4" height="72" fill="#000"/>
<rect x="809" y="265" width="2" height="70" fill="#0000ff"/>
<rect x="816" y="260" width="1" height="79" fill="#000"/>
<rect x="815" y="264" width="4" height="53" fill="#000"/>
<rect x="816" y="265" width="2" height="51" fill="#ff0000"/>
<rect x="823" y="276" width="1" height="50" fill="#000"/>
<rect x="822" y="310" width="4" height="5" fill="#000"/>
<rect x="823" y="311" width="2" height="3" fill="#0000ff"/>
<rect x="830" y="282" width="1" height="56" fill="#000"/>
<rect x="829" y="299" width="4" height="12" fill="#000"/>
<rect x="830" y="300" width="2" height="10" fill="#0000ff"/>
<rect x="836" y="285" width="1" height="32" fill="#000"/>
<rect x="835" y="299" width="4" height="12" fill="#000"/>
<rect x="836" y="300" width="2" height="10" fill="#ff0000"/>
<rect x="843" y="308" width="1" height="103" fill="#000"/>
<rect x="842" y="310" width="4" height="93" fill="#000"/>
<rect x="843" y="311" width="2" height="91" fill="#ff0000"/>
<rect x="850" y="334" width="1" height="75" fill="#000"/>
<rect x="849" y="338" width="4" height="65" fill="#000"/>
<rect x="850" y="339" width="2" height="63" fill="#0000ff"/>
<rect x="856" y="340" width="1" height="37" fill="#000"/>
<rect x="855" y="344" width="4" height="19" fill="#000"/>
<rect x="856" y="345" width="2" height="17" fill="#ff0000"/>
<rect x="863" y="326" width="1" height="57" fill="#000"/>
<rect x="862" y="363" width="4" height="2" fill="#000"/>
<rect x="870" y="341" width="1" height="45" fill="#000"/>
<rect x="869" y="362" width="4" height="2" fill="#000"/>
<rect x="877" y="338" width="1" height="69" fill="#000"/>
<rect x="876" y="362" width="4" height="37" fill="#000"/>
<rect x="877" y="363" width="2" height="35" fill="#ff0000"/>
<rect x="883" y="370" width="1" height="48" fill="#000"/>
<rect x="882" y="399" width="4" height="11" fill="#000"/>
<rect x="883" y="400" width="2" height="9" fill="#ff0000"/>
<rect x="890" y="385" width="1" height="57" fill="#000"/>
<rect x="889" y="405" width="4" height="25" fill="#000"/>
<rect x="890" y="406" width="2" height="23" fill="#ff0000"/>
<rect x="897" y="416" width="1" height="91" fill="#000"/>
<rect x="896" y="431" width="4" height="67" fill="#000"/>
<rect x="897" y="432" width="2" height="65" fill="#ff0000"/>
<rect x="903" y="441" width="1" height="60" fill="#000"/>
<rect x="902" y="454" width="4" height="44" fill="#000"/>
<rect x="903" y="455" width="2" height="42" fill="#0000ff"/>
<rect x="910" y="442" width="1" height="40" fill="#000"/>
<rect x="909" y="453" width="4" height="15" fill="#000"/>
<rect x="910" y="454" width="2" height="13" fill="#ff0000"/>
<rect x="917" y="432" width="1" height="58" fill="#000"/>
<rect x="916" y="468" width="4" height="12" fill="#000"/>
<rect x="917" y="469" width="2" height="10" fill="#ff0000"/>
<rect x="924" y="443" width="1" height="46" fill="#000"/>
<rect x="923" y="458" width="4" height="24" fill="#000"/>
<rect x="924" y="459" width="2" height="22" fill="#0000ff"/>
<rect x="930" y="436" width="1" height="48" fill="#000"/>
<rect x="929" y="458" width="4" height="16" fill="#000"/>
<rect x="930" y="459" width="2" height="14" fill="#ff0000"/>
<rect x="937" y="449" width="1" height="60" fill="#000"/>
<rect x="936" y="473" width="4" height="16" fill="#000"/>
<rect x="937" y="474" width="2" height="14" fill="#ff0000"/>
<rect x="944" y="463" width="1" height="33" fill="#000"/>
<rect x="943" y="480" width="4" height="7" fill="#000"/>
<rect x="944" y="481" width="2" height="5" fill="#0000ff"/>
<rect x="950" y="469" width="1" height="73" fill="#000"/>
<rect x="949" y="480" width="4" height="55" fill="#000"/>
<rect x="950" y="481" width="2" height="53" fill="#ff0000"/>
<rect x="12.5" y="85.5" width="1044" height="614" fill="none" stroke="#000" stroke-width="1"/>
<rect x="1057" y="126" width="4" height="1" fill="#e00000"/>
<rect x="1057" y="160" width="4" height="1" fill="#e00000"/>
<rect x="1057" y="193" width="4" height="1" fill="#e00000"/>
<rect x="1057" y="227" width="4" height="1" fill="#e00000"/>
<rect x="1057" y="260" width="4" height="1" fill="#e00000"/>
<rect x="1057" y="294" width="4" height="1" fill="#e00000"/>
<rect x="1057" y="327" width="4" height="1" fill="#e00000"/>
<rect x="1057" y="361" width="4" height="1" fill="#e00000"/>
<rect x="1057" y="394" width="4" height="1" fill="#e00000"/>
<rect x="1057" y="428" width="4" height="1" fill="#e00000"/>
<rect x="1057" y="461" width="4" height="1" fill="#e00000"/>
<rect x="1057" y="495" width="4" height="1" fill="#e00000"/>
<rect x="1057" y="528" width="4" height="1" fill="#e00000"/>
<rect x="1057" y="562" width="4" height="1" fill="#e00000"/>
<rect x="1057" y="595" width="4" height="1" fill="#e00000"/>
<rect x="1057" y="629" width="4" height="1" fill="#e00000"/>
<rect x="1057" y="662" width="4" height="1" fill="#e00000"/>
<rect x="1057" y="696" width="4" height="1" fill="#e00000"/>
<rect x="52" y="700" width="1" height="2" fill="#e00000"/>
<rect x="85" y="700" width="1" height="2" fill="#e00000"/>
<rect x="119" y="700" width="1" height="2" fill="#e00000"/>
<rect x="152" y="700" width="1" height="2" fill="#e00000"/>
<rect x="186" y="700" width="1" height="2" fill="#e00000"/>
<rect x="219" y="700" width="1" height="2" fill="#e00000"/>
<rect x="253" y="700" width="1" height="2" fill="#e00000"/>
<rect x="286" y="700" width="1" height="2" fill="#e00000"/>
<rect x="320" y="700" width="1" height="2" fill="#e00000"/>
<rect x="353" y="700" width="1" height="2" fill="#e00000"/>
<rect x="387" y="700" width="1" height="2" fill="#e00000"/>
<rect x="420" y="700" width="1" height="2" fill="#e00000"/>
<rect x="454" y="700" width="1" height="2" fill="#e00000"/>
<rect x="488" y="700" width="1" height="2" fill="#e00000"/>
<rect x="521" y="700" width="1" height="2" fill="#e00000"/>
<rect x="555" y="700" width="1" height="2" fill="#e00000"/>
<rect x="588" y="700" width="1" height="2" fill="#e00000"/>
<rect x="622" y="700" width="1" height="2" fill="#e00000"/>
<rect x="655" y="700" width="1" height="2" fill="#e00000"/>
<rect x="689" y="700" width="1" height="2" fill="#e00000"/>
<rect x="722" y="700" width="1" height="2" fill="#e00000"/>
<rect x="756" y="700" width="1" height="2" fill="#e00000"/>
<rect x="789" y="700" width="1" height="2" fill="#e00000"/>
<rect x="823" y="700" width="1" height="2" fill="#e00000"/>
<rect x="856" y="700" width="1" height="2" fill="#e00000"/>
<rect x="890" y="700" width="1" height="2" fill="#e00000"/>
<rect x="924" y="700" width="1" height="2" fill="#e00000"/>
<rect x="962" y="700" width="1" height="2" fill="#e00000"/>
<rect x="995" y="700" width="1" height="2" fill="#e00000"/>
</svg>
<div class="a" style="left:12px;top:71px;font-size:11px;line-height:14px;color:#000;white-space:nowrap">Silver, spot , Daily, # 140 / 300</div>
<div class="yl" style="top:120px">22.0000</div><div class="yl" style="top:154px">21.8000</div><div class="yl" style="top:187px">21.6000</div><div class="yl" style="top:221px">21.4000</div><div class="yl" style="top:254px">21.2000</div><div class="yl" style="top:288px">21.0000</div><div class="yl" style="top:321px">20.8000</div><div class="yl" style="top:355px">20.6000</div><div class="yl" style="top:388px">20.4000</div><div class="yl" style="top:422px">20.2000</div><div class="yl" style="top:455px">20.0000</div><div class="yl" style="top:489px">19.8000</div><div class="yl" style="top:522px">19.6000</div><div class="yl" style="top:556px">19.4000</div><div class="yl" style="top:589px">19.2000</div><div class="yl" style="top:623px">19.0000</div><div class="yl" style="top:656px">18.8000</div><div class="yl" style="top:690px">18.6000</div>
<div class="xl" style="left:32px">10</div><div class="xl" style="left:65px">17</div><div class="xl" style="left:99px">24</div><div class="xl" style="left:132px">03</div><div class="xl" style="left:166px">10</div><div class="xl" style="left:199px">17</div><div class="xl" style="left:233px">24</div><div class="xl" style="left:266px">31</div><div class="xl" style="left:300px">07</div><div class="xl" style="left:333px">14</div><div class="xl" style="left:367px">21</div><div class="xl" style="left:400px">28</div><div class="xl" style="left:434px">05</div><div class="xl" style="left:468px">12</div><div class="xl" style="left:501px">19</div><div class="xl" style="left:535px">26</div><div class="xl" style="left:568px">02</div><div class="xl" style="left:602px">09</div><div class="xl" style="left:635px">16</div><div class="xl" style="left:669px">23</div><div class="xl" style="left:702px">30</div><div class="xl" style="left:736px">07</div><div class="xl" style="left:769px">14</div><div class="xl" style="left:803px">21</div><div class="xl" style="left:836px">28</div><div class="xl" style="left:870px">04</div><div class="xl" style="left:904px">11</div><div class="xl" style="left:942px">18</div><div class="xl" style="left:975px">25</div><div class="ml" style="left:12px">Feb/10/14</div><div class="ml" style="left:112px">Mar/03</div><div class="ml" style="left:280px">Apr/07</div><div class="ml" style="left:414px">May/05</div><div class="ml" style="left:548px">Jun/02</div><div class="ml" style="left:716px">Jul/07</div><div class="ml" style="left:850px">Aug/04</div>
<div class="a" style="left:30px;top:50px;width:21px;height:21px;background:#c6e0f8;border:1px solid #86b6e6"></div>
<div class="a" style="left:309px;top:50px;width:21px;height:21px;background:#c6e0f8;border:1px solid #86b6e6"></div>
<div class="a" style="left:378px;top:50px;width:22px;height:21px;background:#c6e0f8;border:1px solid #86b6e6"></div>
<div class="a" style="left:1091px;top:50px;width:19px;height:19px;background:#b8d8f8;border:1px solid #4f86c8"></div>
<div class="a" style="left:94px;top:52px;width:1px;height:17px;background:#9a9a9a"></div>
<div class="a" style="left:373px;top:52px;width:1px;height:17px;background:#9a9a9a"></div>
<div class="a" style="left:484px;top:52px;width:1px;height:17px;background:#9a9a9a"></div>
<div class="a" style="left:574px;top:52px;width:1px;height:17px;background:#9a9a9a"></div>
<div class="a" style="left:643px;top:52px;width:1px;height:17px;background:#9a9a9a"></div>
<div class="a" style="left:691px;top:52px;width:1px;height:17px;background:#9a9a9a"></div>
<div class="a" style="left:760px;top:52px;width:1px;height:17px;background:#9a9a9a"></div>
<div class="a" style="left:93px;top:52px;width:30px;text-align:center;font-size:14px;line-height:17px;color:#383838;transform:scaleX(0.76)">T</div>
<div class="a" style="left:115px;top:52px;width:30px;text-align:center;font-size:14px;line-height:17px;color:#383838;transform:scaleX(0.76)">1</div>
<div class="a" style="left:136px;top:52px;width:30px;text-align:center;font-size:14px;line-height:17px;color:#383838;transform:scaleX(0.76)">5</div>
<div class="a" style="left:157.4px;top:52px;width:30px;text-align:center;font-size:14px;line-height:17px;color:#383838;transform:scaleX(0.76)">10</div>
<div class="a" style="left:178px;top:52px;width:30px;text-align:center;font-size:14px;line-height:17px;color:#383838;transform:scaleX(0.76)">15</div>
<div class="a" style="left:199px;top:52px;width:30px;text-align:center;font-size:14px;line-height:17px;color:#383838;transform:scaleX(0.76)">30</div>
<div class="a" style="left:219.7px;top:52px;width:30px;text-align:center;font-size:14px;line-height:17px;color:#383838;transform:scaleX(0.76)">1H</div>
<div class="a" style="left:241px;top:52px;width:30px;text-align:center;font-size:14px;line-height:17px;color:#383838;transform:scaleX(0.76)">2H</div>
<div class="a" style="left:262px;top:52px;width:30px;text-align:center;font-size:14px;line-height:17px;color:#383838;transform:scaleX(0.76)">4H</div>
<div class="a" style="left:283px;top:52px;width:30px;text-align:center;font-size:14px;line-height:17px;color:#383838;transform:scaleX(0.76)">8H</div>
<div class="a" style="left:304px;top:52px;width:30px;text-align:center;font-size:14px;line-height:17px;color:#383838;transform:scaleX(0.76)">D</div>
<div class="a" style="left:325.5px;top:52px;width:30px;text-align:center;font-size:14px;line-height:17px;color:#383838;transform:scaleX(0.76)">W</div>
<div class="a" style="left:346.5px;top:52px;width:30px;text-align:center;font-size:14px;line-height:17px;color:#383838;transform:scaleX(0.76)">M</div>
<svg class="a" style="left:0;top:0" width="800" height="80">
<rect x="37" y="52" width="1" height="16" fill="#a04060"/>
<rect x="36" y="56" width="3" height="8" fill="#ff6a00"/>
<rect x="42" y="54" width="5" height="10" fill="#9fbde0"/>
<rect x="43" y="54" width="2" height="10" fill="#6f96c4"/>
<rect x="44" y="52" width="1" height="15" fill="#6f8fb8"/>
<g fill="#000">
<rect x="58" y="53" width="1.6" height="13"/><rect x="56" y="56" width="2" height="1.3"/><rect x="59.6" y="62" width="2" height="1.3"/>
<rect x="63.2" y="53" width="1.6" height="13"/><rect x="61.2" y="55" width="2" height="1.3"/><rect x="64.8" y="63" width="2" height="1.3"/>
</g>
<path d="M75 62 L79.5 57.7 L83 61 L89 56" stroke="#5577a8" stroke-width="1.5" fill="none"/>
<rect x="381" y="60" width="14" height="2" fill="#000"/><rect x="385" y="54" width="2" height="13" fill="#000"/>
<g fill="#000"><rect x="405" y="54" width="2" height="12"/><rect x="410" y="54" width="2" height="12"/><rect x="402" y="57" width="14" height="1.6"/><rect x="402" y="63" width="14" height="1.6"/></g>
<g fill="#1a1a1a"><rect x="429" y="55" width="2" height="2"/><rect x="429" y="58" width="2" height="7"/><rect x="427" y="58" width="2" height="1"/><rect x="427" y="64" width="6" height="1.3"/></g>
<path d="M448.5 57 L444.5 59.5 L448.5 62 Z M454 57 L458 59.5 L454 62 Z" fill="#000"/>
<rect x="451" y="58.5" width="0.8" height="2.5" fill="#999"/>
<text x="471.8" y="59.6" font-family="Liberation Sans" font-size="8.5" font-weight="bold" text-anchor="middle" fill="#000" textLength="12.5">vol</text>
<path d="M466 62 H468 V61.5 H469 V62 H472 V61.5 H473 V62 H475 V61.5 H476 V62 H478 V65.5 H466 Z" fill="#3050a8"/>
<g fill="#000">
<rect x="494" y="54" width="1.6" height="13"/><rect x="492" y="56" width="2" height="1.2"/><rect x="495.5" y="63" width="1.8" height="1.2"/>
<rect x="515" y="54" width="1.6" height="13"/><rect x="513" y="56" width="2" height="1.2"/><rect x="516.5" y="63" width="1.8" height="1.2"/>
<rect x="536" y="54" width="1.6" height="12.5"/><rect x="534" y="56" width="2" height="1.2"/><rect x="537.5" y="63" width="1.8" height="1.2"/>
<rect x="544" y="54" width="1.6" height="12.5"/><rect x="542" y="56" width="2" height="1.2"/><rect x="545.5" y="63" width="1.8" height="1.2"/>
<rect x="534" y="59" width="14" height="1.2"/>
</g>
<path d="M497 63.5 L505.5 59" stroke="#222" stroke-width="1" fill="none"/>
<path d="M517 55.3 L527 60.5" stroke="#222" stroke-width="1" fill="none"/>
<path d="M555.5 55 L562 58.5" stroke="#333" stroke-width="1" fill="none" stroke-dasharray="1.5 0.7"/>
<path d="M565 57 L559.5 61 L561.3 61.6 L560.3 65.7 L564.3 61.5 Z" fill="#000"/>
<path d="M582 62 L595 56" stroke="#333" stroke-width="1.2" fill="none"/>
<path d="M584 66 L595 60" stroke="#9a9a9a" stroke-width="1.2" fill="none"/>
<path d="M605 56 L615 65 M615 56 L605 65" stroke="#ff6600" stroke-width="2.8" fill="none"/>
<path d="M625 52.5 L629.5 58 M629.5 52.5 L625 58" stroke="#ff6600" stroke-width="1.4" fill="none"/>
<text x="633" y="66" font-family="Liberation Sans" font-size="9.5" font-weight="bold" text-anchor="middle" fill="#111">all</text>
<path d="M655.8 55.8 H661.2 V60 H655.8 Z M652.8 60 H663.2 V63.3 H652.8 Z" stroke="#000" stroke-width="1.6" fill="none"/>
<rect x="652" y="64" width="12" height="1" fill="#7090d8"/>
<path d="M674.5 54.5 H680 L683 57.5 V66.5 H674.5 Z" stroke="#888" stroke-width="1" fill="#f6f6f6"/>
<circle cx="680" cy="61" r="2.8" stroke="#222" stroke-width="1.4" fill="none"/>
<path d="M682 63 L685.5 66.5" stroke="#222" stroke-width="1.8"/>
<circle cx="706" cy="57.8" r="3" stroke="#222" stroke-width="1.5" fill="none"/>
<path d="M708.2 60 L711.8 63.5" stroke="#222" stroke-width="2"/>
<path d="M699.5 63.5 H704.5 M702 61 V66" stroke="#ff6a00" stroke-width="1.5"/>
<circle cx="727" cy="58" r="3" stroke="#222" stroke-width="1.5" fill="none"/>
<path d="M729.2 60.2 L733 63.8" stroke="#222" stroke-width="2"/>
<path d="M721 63.5 H726" stroke="#4f7fd0" stroke-width="1.5"/>
<path d="M741 55 H755 M741 65.5 H755" stroke="#666" stroke-width="1.6"/>
<path d="M745.5 58.5 L747.8 56.5 L750 58.5 M745.5 62 L747.8 64 L750 62" stroke="#777" stroke-width="1" fill="none"/>
</svg>
<svg class="a" style="left:1091px;top:50px" width="19" height="19"><path d="M6 6 L10 9.5 L6 13 Z" fill="#8090a8"/><path d="M10 6 V13 M10 9.5 L14 6.5 M10 9.5 L14 12.5" stroke="#607090" stroke-width="1.3" fill="none"/><rect x="14" y="6" width="1" height="8" fill="#a06030"/></svg>
<div class="a" style="left:12px;top:746px;width:12px;height:12px;background:#2d5d9e"></div>
<div class="a" style="left:26px;top:740px;width:1px;height:23px;background:#8a8a8a"></div>
<div class="a" style="left:30px;top:741px;width:150px;height:22px;background:#fff;border:1px solid #a0a0a8;border-top-color:#8a8a90"></div>
<svg class="a" style="left:33px;top:745px" width="18" height="14"><circle cx="7.2" cy="4.2" r="2.9" stroke="#333" stroke-width="1.3" fill="none"/><path d="M5.2 6.4 L1 10.5" stroke="#333" stroke-width="1.7"/><rect x="8" y="11" width="1.5" height="1.5" fill="#333"/><rect x="11" y="11" width="1.5" height="1.5" fill="#333"/><rect x="14" y="11" width="1.5" height="1.5" fill="#333"/></svg>
<div class="a" style="left:51px;top:745px;font-size:11px;line-height:14px;color:#707070;white-space:nowrap">Search for instrument</div>
<div class="a" style="left:198px;top:744px;width:1px;height:19px;background:#6a6a6a"></div>
<div class="a" style="left:202px;top:746px;font-size:12.3px;font-weight:bold;line-height:14px;color:#111;white-space:nowrap;transform:scaleX(0.955);transform-origin:0 0">14 Aug 2014 20:00:00 EDT</div>
<div class="a" style="left:995px;top:450px;width:60px;text-align:right;font-size:11px;line-height:12px;color:#0000f0">20.0000</div>
<div class="a" style="left:995px;top:618px;width:60px;text-align:right;font-size:11px;line-height:12px;color:#f00000">19.0000</div>
<div class="a" style="left:1059px;top:528px;width:45px;height:13px;background:#fff;border:1px solid #e02020"></div>
<div class="a" style="left:1061px;top:529px;font-size:11px;line-height:13px;color:#0000e0;white-space:nowrap">19.5640</div></body></html>
